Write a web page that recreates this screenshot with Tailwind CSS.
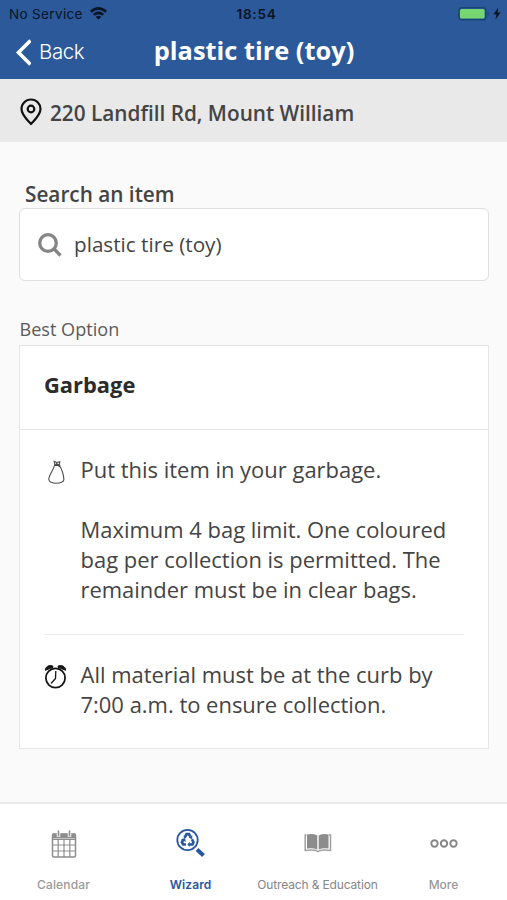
<!DOCTYPE html>
<html lang="en">
<head>
<meta charset="utf-8">
<title>plastic tire (toy)</title>
<script src="https://cdn.jsdelivr.net/npm/@tailwindcss/browser@4"></script>
</head>
<body class="flex h-[900px] w-[507px] flex-col overflow-hidden bg-[#fafafa] font-['Open_Sans','Noto_Sans',sans-serif] text-[#444]">
<header class="h-[79px] shrink-0 bg-[#2b5999]">
  <div class="grid h-[28px] grid-cols-3 items-center pl-[9px] pr-[5px] font-['Inter',sans-serif] text-[13.5px] text-[#071426]">
    <div class="flex items-center gap-2 whitespace-nowrap"><span class="tracking-[0.35px]">No Service</span>
      <svg class="-mt-px -ml-px h-[13px] w-[17px]" viewBox="0 0 17 13" fill="none" stroke="currentColor" stroke-width="2.5"><path d="M.9 4.8Q8.5-2 16.1 4.8M3.8 7.9q4.7-4.1 9.4 0"/><path d="M8.5 12.6 5.7 10q2.8-2.4 5.6 0Z" fill="currentColor" stroke="none"/></svg>
    </div>
    <div class="pl-[2px] text-center font-semibold tracking-[0.8px]">18:54</div>
    <div class="flex items-center justify-end gap-[3px]">
      <svg class="-mt-px h-[14px] w-[32px]" viewBox="0 0 32 14"><rect x=".8" y=".7" width="27" height="12" rx="3" fill="none" stroke="#19446f" stroke-width="1.3"/><rect x="2" y="2" width="24.6" height="9.5" rx="1.5" fill="#76d672"/><path d="M29.600 4.500q2.100 2.200 0 4.400Z" fill="#123b68"/></svg>
      <svg class="-mt-px mr-px h-[13px] w-[8px]" viewBox="0 0 8 13"><path d="M5.300.5.5 7.200h3L2.500 12.500l5-7h-3Z" fill="currentColor"/></svg>
    </div>
  </div>
  <div class="grid h-[46px] grid-cols-[1fr_auto_1fr] items-center pl-[15px] pr-[14px] text-white">
    <div class="flex items-center gap-[8px]">
      <svg class="mt-[2px] h-[27px] w-[16px]" viewBox="0 0 16 27" fill="none" stroke="currentColor" stroke-width="3.600"><path d="M15.500 1.500 3.500 13.500l12 12"/></svg>
      <span class="mt-[3px] font-['Inter',sans-serif] text-[20.5px] font-light tracking-[-0.4px]">Back</span>
    </div>
    <h1 class="-mt-[2px] text-[25.4px] font-bold">plastic tire (toy)</h1>
    <div></div>
  </div>
</header>
<div class="flex h-[63px] shrink-0 items-center gap-[8px] bg-[#e9e9e9] pl-[20px] pt-[5px]">
  <svg class="-mt-[3px] h-[28px] w-[22px]" viewBox="0 0 22 28" fill="none" stroke="#111" stroke-width="2.2"><path d="M11 26C7.500 22 1.500 17 1.500 11a9.500 9.500 0 0 1 19 0C20.500 17 14.500 22 11 26Z" stroke-linejoin="round"/><circle cx="11" cy="11" r="3.3"/></svg>
  <span class="mt-[2px] text-[20.75px] font-semibold">220 Landfill Rd, Mount William</span>
</div>
<main class="flex grow flex-col px-[19px]">
  <label class="mt-[38px] pl-[6px] text-[20.75px] font-semibold leading-[28px]">Search an item</label>
  <div class="flex h-[73px] w-[470px] items-center gap-[12px] rounded-[6px] border border-[#dfdfdf] bg-white pl-[18px]">
    <svg class="h-[24px] w-[24px]" viewBox="0 0 24 24" fill="none" stroke="#858585" stroke-width="3.3"><circle cx="10" cy="10" r="8.300"/><path d="m16 16 6.500 6.500"/></svg>
    <span class="text-[20.7px]">plastic tire (toy)</span>
  </div>
  <h2 class="mt-[34px] h-[30px] pl-[0.5px] text-[18.1px] leading-[29px] text-[#5b5b5b]">Best Option</h2>
  <section class="h-[404px] w-[470px] border border-[#e6e6e6] bg-white">
    <h3 class="flex h-[84px] items-center border-b border-[#e6e6e6] pb-[4px] pl-[24px] text-[21.9px] font-bold text-[#2b2b2b]">Garbage</h3>
    <div class="mx-[24px] flex h-[205px] border-b border-[#ececec] pt-[25px] text-[21.96px] leading-[30px]">
      <svg class="ml-[4px] mr-[15.5px] mt-[5px] h-[24px] w-[17px] shrink-0" viewBox="0 0 17 24" fill="none" stroke="#4a4a4a" stroke-width="1.1"><path d="M6.500 5.500C5.500 10 1 15 .8 19.200.7 24.500 16 24.500 15.900 19.500 15.500 14.500 14 9.500 11.500 5.500Z"/><path d="m7 5-.8-3.500 2.600 1 3-.8-.8 3.800Z"/><path d="M6.500 5h5.500M8 3.500l4 3" stroke-width="1.700"/></svg>
      <div class="whitespace-nowrap"><p>Put this item in your garbage.</p><p class="mt-[30px]">Maximum 4 bag limit. One coloured<br>bag per collection is permitted. The<br>remainder must be in clear bags.</p></div>
    </div>
    <div class="mx-[24px] flex pt-[25px] text-[21.96px] leading-[30px]">
      <svg class="mr-[13.5px] mt-[4px] h-[25px] w-[23px] shrink-0" viewBox="0 0 23 25" fill="none" stroke="#151515"><circle cx="11.500" cy="14" r="9.600" stroke-width="1.800"/><path d="M1.300 6.300C1.500 2.500 5 .8 8.800 2L9 3.300ZM21.700 6.300C21.500 2.500 18 .8 14.200 2L14 3.300Z" fill="#151515" stroke-width="1"/><path d="m11.800 7-.3 7.500-4.500 5" stroke-width="1.300"/></svg>
      <p class="whitespace-nowrap">All material must be at the curb by<br>7:00 a.m. to ensure collection.</p>
    </div>
  </section>
</main>
<nav class="grid h-[98px] shrink-0 grid-cols-[127px_127px_127px_126px] border-t-2 border-[#e9e9e9] bg-white font-['Inter',sans-serif] text-[12px] font-medium text-[#999]">
  <div class="flex flex-col items-center pt-[25px]">
    <svg class="h-[30px] w-[26px]" viewBox="0 0 26 30" fill="none" stroke="#8d8d8d"><rect x="1.500" y="5" width="23" height="23" rx="1.500" stroke-width="1.500"/><path d="M1.500 5h23v4h-23Z" fill="#8d8d8d"/><path d="M2 10.500h22M2 16h22M2 22h22M7.200 10v18M13 10v18M18.800 10v18" stroke-width="1.200"/><path d="M7.500 2v6M18.500 2v6" stroke="#fff" stroke-width="3.500"/><path d="M7.500 1.500v6M18.500 1.500v6" stroke-width="1.600"/></svg>
    <span class="mt-[17px] leading-[18px] tracking-[0.15px]">Calendar</span>
  </div>
  <div class="flex flex-col items-center pt-[24px] text-[#2857a0]">
    <svg class="h-[30px] w-[30px]" viewBox="0 0 30 30" fill="none" stroke="currentColor"><circle cx="11.500" cy="12" r="10.200" stroke-width="1.800"/><path d="m21 21.500 6.500 6" stroke-width="4"/><g stroke-width="2.700"><path d="m8.500 9.800 2-3.600H13l1.300 2.400"/><path d="m16 11.200 1.400 3-1 2.300h-3"/><path d="M10 16.500H7.200l-1.300-2.200 1.200-2.400"/></g><path d="m16.200 7.200.1 4-3.700-1.400ZM13.800 13.800v5.200L11.300 16.400ZM5 11.200l4-1.100.8 3.900Z" fill="currentColor" stroke="none"/></svg>
    <span class="mt-[18px] font-semibold leading-[18px] tracking-[0.1px]">Wizard</span>
  </div>
  <div class="flex flex-col items-center pt-[25px]">
    <svg class="h-[30px] w-[28px]" viewBox="0 0 28 30"><path d="M3 5.500q6-1.300 10.300 1V20.500Q8.500 18.500 3 19.500ZM24.500 5.500q-5.500-1.300-9.800 1V20.500Q19 18.500 24.500 19.500Z" fill="#8c8c8c"/><path d="M2.500 6H1.200v15.500q7-1 10.800 0 2 1.800 4 0 4-1 10.500 0V6H25" fill="none" stroke="#a0a0a0" stroke-width="1.500"/></svg>
    <span class="mt-[17px] whitespace-nowrap leading-[18px] font-normal tracking-[-0.15px] text-[#858585]">Outreach &amp; Education</span>
  </div>
  <div class="flex flex-col items-center pr-px pt-[25px]">
    <svg class="h-[30px] w-[28px]" viewBox="0 0 28 30" fill="none" stroke="#858585" stroke-width="1.900"><circle cx="4.500" cy="14.500" r="3.200"/><circle cx="14" cy="14.500" r="3.200"/><circle cx="23.500" cy="14.500" r="3.200"/></svg>
    <span class="mt-[17px] leading-[18px]">More</span>
  </div>
</nav>
</body>
</html>
